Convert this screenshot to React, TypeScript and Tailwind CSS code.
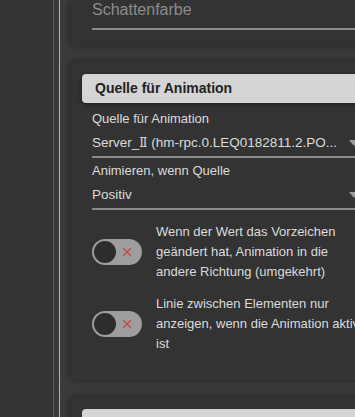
import { X } from 'lucide-react';

function Toggle() {
  return (
    <div className="relative h-[26px] w-[50px] shrink-0 rounded-full bg-[#9d9d9d]">
      <div className="absolute left-[2px] top-[2px] h-[22px] w-[22px] rounded-full bg-[#2e2e2e]" />
      <X className="absolute right-[8px] top-[6px] h-[14px] w-[14px] text-[#c0504d]" strokeWidth={2.5} />
    </div>
  );
}

function Arrow() {
  return (
    <svg width="10" height="6" viewBox="0 0 10 6" className="shrink-0">
      <path d="M0 0 L10 0 L5 6 Z" fill="#9a9a9a" />
    </svg>
  );
}

function ToggleRow({ lines, top }: { lines: string[]; top: string }) {
  return (
    <div className={`flex items-center gap-[14px] ${top}`}>
      <Toggle />
      <div className="text-[13px] leading-[20px] text-[#dcdcdc]">
        {lines.map((l) => (
          <div key={l} className="whitespace-nowrap">{l}</div>
        ))}
      </div>
    </div>
  );
}

function SelectValue({ children }: { children: React.ReactNode }) {
  return (
    <div className="mt-[8px] flex w-[267px] items-center justify-between">
      <span className="whitespace-nowrap text-[13.5px] leading-[16px] text-[#dcdcdc]">{children}</span>
      <Arrow />
    </div>
  );
}

export default function App() {
  return (
    <div
      className="flex h-[417px] w-[355px] overflow-hidden bg-[#333333]"
      style={{ fontFamily: '"Liberation Sans", Arial, sans-serif' }}
    >
      <div className="w-[53px] shrink-0 bg-[#333333]" />
      <div className="w-px shrink-0 bg-[#5e5e5e]" />
      <div className="w-[5px] shrink-0 bg-[#383838]" />
      <div className="w-px shrink-0 bg-[#b4b4b4]" />
      <div className="flex w-[330px] shrink-0 flex-col gap-[17px] bg-[#3b3b3b] pl-[10px]">
        {/* card 1, scrolled partly out of view */}
        <div className="h-[45px] w-[330px] shrink-0 rounded-bl-[5px] bg-[#333333] pl-[22px] shadow-[0_0_8px_rgba(0,0,0,0.45)]">
          <div className="pt-px text-[16px] leading-[18px] text-[#8c8c8c]">Schattenfarbe</div>
          <div className="mt-[9px] h-[2px] bg-[#8a8a8a]" />
        </div>

        {/* card 2 */}
        <div className="h-[318px] w-[330px] shrink-0 rounded-l-[5px] bg-[#333333] pt-[12px] shadow-[0_0_8px_rgba(0,0,0,0.45)]">
          <div className="ml-[12px] flex h-[29px] items-center rounded-l-[4px] bg-[#d4d4d4] pl-[13px] text-[14px] font-bold text-[#222222] shadow-[0_1px_4px_rgba(0,0,0,0.5)]">
            Quelle für Animation
          </div>
          <div className="pl-[22px]">
            <div className="mt-[8px] text-[13px] leading-[16px] text-[#dcdcdc]">Quelle für Animation</div>
            <SelectValue>
              Server_<span style={{ fontFamily: '"DejaVu Serif", serif' }} className="text-[12px]">Ⅱ</span> (hm-rpc.0.LEQ0182811.2.PO...
            </SelectValue>
            <div className="mt-[5px] h-[2px] bg-[#8a8a8a]" />
            <div className="mt-[5px] text-[13px] leading-[16px] text-[#dcdcdc]">Animieren, wenn Quelle</div>
            <SelectValue>Positiv</SelectValue>
            <div className="mt-[5px] h-[2px] bg-[#8a8a8a]" />
            <ToggleRow
              top="mt-[12px]"
              lines={['Wenn der Wert das Vorzeichen', 'geändert hat, Animation in die', 'andere Richtung (umgekehrt)']}
            />
            <ToggleRow
              top="mt-[12px]"
              lines={['Linie zwischen Elementen nur', 'anzeigen, wenn die Animation aktiv', 'ist']}
            />
          </div>
        </div>

        {/* card 3 */}
        <div className="h-[60px] w-[330px] shrink-0 rounded-l-[5px] bg-[#333333] pt-[12px] shadow-[0_0_8px_rgba(0,0,0,0.45)]">
          <div className="ml-[12px] h-[29px] rounded-l-[4px] bg-[#d4d4d4]" />
        </div>
      </div>
    </div>
  );
}
